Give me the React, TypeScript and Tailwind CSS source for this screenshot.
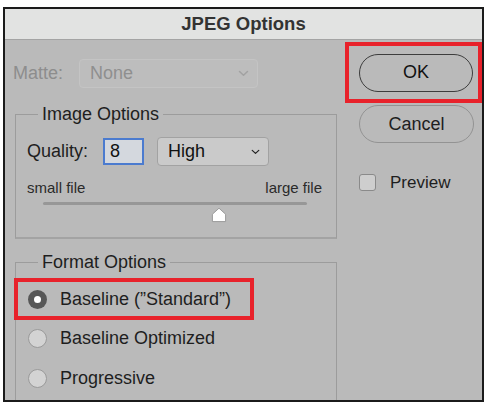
import type { ReactNode } from 'react'

const QUALITY = 8
const QUALITY_MAX = 12

function Chevron({ className }: { className?: string }) {
  return (
    <svg className={className} width="11" height="7" viewBox="0 0 11 7" fill="none">
      <path d="M1.5 1.5 5.5 5.2 9.5 1.5" stroke="currentColor" strokeWidth="1.5" strokeLinecap="round" strokeLinejoin="round" />
    </svg>
  )
}

function Group({ title, children, className }: { title: string; children: ReactNode; className?: string }) {
  return (
    <fieldset className={`w-[322px] border border-[#9c9c9c] ${className ?? ''}`}>
      <legend className="ml-[22px] px-[4px] text-[18px] leading-[22px] text-[#1e1e1e]">{title}</legend>
      {children}
    </fieldset>
  )
}

function Radio({ checked }: { checked?: boolean }) {
  if (checked) {
    return (
      <span className="flex h-[19px] w-[19px] items-center justify-center rounded-full bg-[#575757]">
        <span className="h-[7px] w-[7px] rounded-full bg-white" />
      </span>
    )
  }
  return <span className="h-[19px] w-[19px] rounded-full border border-[#9a9a9a] bg-[#d3d3d3]" />
}

function SliderThumb() {
  return (
    <svg width="16" height="16" viewBox="0 0 16 16">
      <path
        d="M8 1.2 14.6 7.2 14.6 14.6 1.4 14.6 1.4 7.2Z"
        fill="#ffffff"
        stroke="#9a9a9a"
        strokeWidth="1"
        strokeLinejoin="round"
      />
    </svg>
  )
}

export default function App() {
  const thumbLeft = `${(QUALITY / QUALITY_MAX) * 100}%`

  return (
    <div className="h-[403px] w-[487px] bg-white pl-[3px] pt-[7px] font-['Liberation_Sans',Arial,sans-serif]">
      <div className="flex h-[395px] w-[481px] flex-col overflow-hidden border-2 border-[#1b1b1b] bg-[#bababa]">
        {/* title bar */}
        <div className="flex h-[31px] shrink-0 items-center justify-center border-b border-[#a4a4a4] bg-[#e2e3e2] pb-[1px]">
          <span className="text-[18.5px] font-bold text-[#333333]">JPEG Options</span>
        </div>

        <div className="flex min-h-0 flex-1">
          {/* left column */}
          <div className="flex w-[340px] flex-col pl-[10px] pt-[18px]">
            <div className="flex h-[30px] items-center">
              <span className="-ml-[2px] w-[66px] text-[18px] text-[#8d8d8d]">Matte:</span>
              <div className="flex h-[29px] w-[179px] items-center justify-between rounded-[4px] border border-[#c4c4c4] bg-[#bdbdbd] pl-[10px] pr-[8px]">
                <span className="text-[18px] text-[#8f8f8f]">None</span>
                <Chevron className="text-[#a2a2a2]" />
              </div>
            </div>

            <Group title="Image Options" className="mt-[15px] border-b-2 border-b-[#a3a3a3]">
              <div className="mt-[12px] flex h-[29px] items-center pl-[11px]">
                <span className="w-[76px] text-[18px] text-[#1e1e1e]">Quality:</span>
                <div className="flex h-[27px] w-[41px] items-center border-2 border-[#4b7bcf] bg-[#d4d8de] pl-[5px]">
                  <span className="text-[18px] text-[#111111]">8</span>
                </div>
                <div className="ml-[13px] flex h-[29px] w-[112px] items-center justify-between rounded-[4px] border border-[#a2a2a2] bg-[#cacaca] pl-[10px] pr-[8px]">
                  <span className="text-[18px] text-[#111111]">High</span>
                  <Chevron className="h-[6px] w-[9px] text-[#222222]" />
                </div>
              </div>

              <div className="mt-[13px] flex h-[18px] items-center justify-between pl-[11px] pr-[14px] text-[15px] text-[#2a2a2a]">
                <span>small file</span>
                <span>large file</span>
              </div>

              <div className="ml-[27px] mr-[29px] mt-[5px] pb-[14px]">
                <div className="h-[3px] rounded-full bg-[#979797]" />
                <div className="relative mt-[2px] h-[16px]">
                  <div className="absolute top-0 -translate-x-1/2" style={{ left: thumbLeft }}>
                    <SliderThumb />
                  </div>
                </div>
              </div>
            </Group>

            <Group title="Format Options" className="mt-[12px] flex-1 border-b-0">
              <div className="mt-[5px] flex flex-col">
                <div className="-ml-[2px] flex h-[42px] w-[240px] items-center gap-[13px] border-4 border-[#e8222b] pl-[10px]">
                  <Radio checked />
                  <span className="text-[18px] text-[#1e1e1e]">Baseline (&rdquo;Standard&rdquo;)</span>
                </div>
                <div className="flex h-[37px] items-center gap-[13px] pl-[12px]">
                  <Radio />
                  <span className="text-[18px] text-[#1e1e1e]">Baseline Optimized</span>
                </div>
                <div className="flex h-[42px] items-center gap-[13px] pl-[12px]">
                  <Radio />
                  <span className="text-[18px] text-[#1e1e1e]">Progressive</span>
                </div>
              </div>
            </Group>
          </div>

          {/* right column */}
          <div className="flex flex-1 flex-col pt-[2px]">
            <div className="flex h-[61px] items-center border-4 border-[#e8222b] pl-[10px]">
              <button className="flex h-[38px] w-[114px] items-center justify-center rounded-full border border-[#3d3d3d] text-[18px] text-[#111111]">
                OK
              </button>
            </div>
            <button className="ml-[14px] mt-[2px] flex h-[38px] w-[115px] items-center justify-center rounded-full border border-[#939393] text-[18px] text-[#1e1e1e]">
              Cancel
            </button>
            <div className="ml-[14px] mt-[27px] flex items-center gap-[14px]">
              <span className="h-[17px] w-[17px] rounded-[3px] border border-[#8a8a8a] bg-[#cecece]" />
              <span className="text-[17px] text-[#1e1e1e]">Preview</span>
            </div>
          </div>
        </div>
      </div>
    </div>
  )
}
